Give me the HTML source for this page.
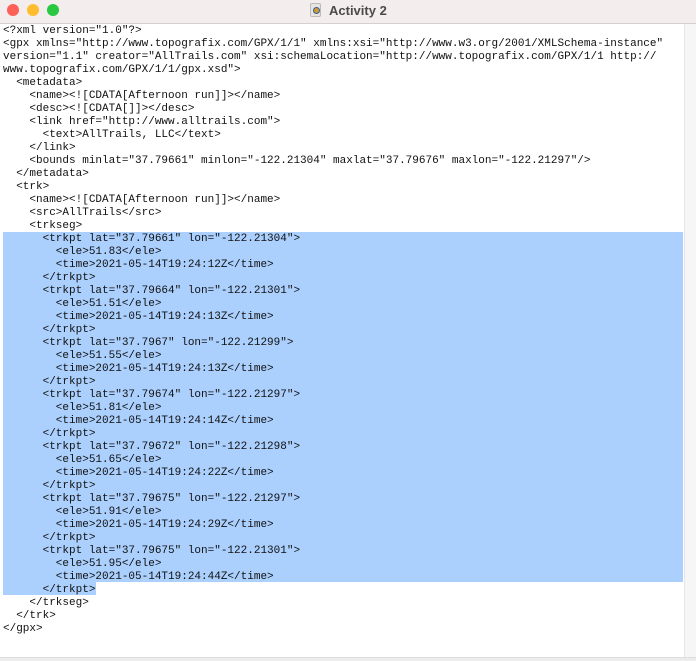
<!DOCTYPE html>
<html><head><meta charset="utf-8"><style>
body{margin:0;width:696px;height:660px;overflow:hidden;background:#fff;position:relative;font-family:"Liberation Sans",sans-serif}
.tb{position:absolute;left:0;top:0;width:696px;height:23px;background:#f4eded;border-bottom:1px solid #d6d0d0}
.dot{position:absolute;top:4px;width:12px;height:12px;border-radius:50%}
.title{position:absolute;left:329px;top:3px;font-size:13px;font-weight:bold;color:#4a4a4a}
.icon{position:absolute;left:310px;top:3px;width:11px;height:14px;background:#e8e4e0;border-radius:2px;border:1px solid #bbb;box-sizing:border-box}
.icon:after{content:"";position:absolute;left:2px;top:3px;width:5px;height:5px;border-radius:50%;background:#c9a030;border:1px solid #3a5a9a}
.gut{position:absolute;left:684px;top:24px;width:12px;height:636px;background:#f6f6f6;border-left:1px solid #e6e6e6}
.bot{position:absolute;left:0;top:657px;width:696px;height:3px;background:#ececec;border-top:1px solid #ddd}
.sel{position:absolute;background:#abd0fe}
pre{position:absolute;left:3px;top:25px;margin:0;font-family:"Liberation Mono",monospace;font-size:11px;line-height:13px;color:#111}
</style></head><body>
<div class="tb"></div>
<div class="dot" style="left:7px;background:#fe5f57"></div>
<div class="dot" style="left:27px;background:#febc2e"></div>
<div class="dot" style="left:47px;background:#28c840"></div>
<div class="icon"></div>
<div class="title">Activity 2</div>
<div class="gut"></div>
<div class="sel" style="left:3px;top:232px;width:680px;height:350px"></div>
<div class="sel" style="left:3px;top:582px;width:93px;height:13px"></div>
<pre>&lt;?xml version="1.0"?&gt;
&lt;gpx xmlns="http://www.topografix.com/GPX/1/1" xmlns:xsi="http://www.w3.org/2001/XMLSchema-instance"
version="1.1" creator="AllTrails.com" xsi:schemaLocation="http://www.topografix.com/GPX/1/1 http://
www.topografix.com/GPX/1/1/gpx.xsd"&gt;
  &lt;metadata&gt;
    &lt;name&gt;&lt;![CDATA[Afternoon run]]&gt;&lt;/name&gt;
    &lt;desc&gt;&lt;![CDATA[]]&gt;&lt;/desc&gt;
    &lt;link href="http://www.alltrails.com"&gt;
      &lt;text&gt;AllTrails, LLC&lt;/text&gt;
    &lt;/link&gt;
    &lt;bounds minlat="37.79661" minlon="-122.21304" maxlat="37.79676" maxlon="-122.21297"/&gt;
  &lt;/metadata&gt;
  &lt;trk&gt;
    &lt;name&gt;&lt;![CDATA[Afternoon run]]&gt;&lt;/name&gt;
    &lt;src&gt;AllTrails&lt;/src&gt;
    &lt;trkseg&gt;
      &lt;trkpt lat="37.79661" lon="-122.21304"&gt;
        &lt;ele&gt;51.83&lt;/ele&gt;
        &lt;time&gt;2021-05-14T19:24:12Z&lt;/time&gt;
      &lt;/trkpt&gt;
      &lt;trkpt lat="37.79664" lon="-122.21301"&gt;
        &lt;ele&gt;51.51&lt;/ele&gt;
        &lt;time&gt;2021-05-14T19:24:13Z&lt;/time&gt;
      &lt;/trkpt&gt;
      &lt;trkpt lat="37.7967" lon="-122.21299"&gt;
        &lt;ele&gt;51.55&lt;/ele&gt;
        &lt;time&gt;2021-05-14T19:24:13Z&lt;/time&gt;
      &lt;/trkpt&gt;
      &lt;trkpt lat="37.79674" lon="-122.21297"&gt;
        &lt;ele&gt;51.81&lt;/ele&gt;
        &lt;time&gt;2021-05-14T19:24:14Z&lt;/time&gt;
      &lt;/trkpt&gt;
      &lt;trkpt lat="37.79672" lon="-122.21298"&gt;
        &lt;ele&gt;51.65&lt;/ele&gt;
        &lt;time&gt;2021-05-14T19:24:22Z&lt;/time&gt;
      &lt;/trkpt&gt;
      &lt;trkpt lat="37.79675" lon="-122.21297"&gt;
        &lt;ele&gt;51.91&lt;/ele&gt;
        &lt;time&gt;2021-05-14T19:24:29Z&lt;/time&gt;
      &lt;/trkpt&gt;
      &lt;trkpt lat="37.79675" lon="-122.21301"&gt;
        &lt;ele&gt;51.95&lt;/ele&gt;
        &lt;time&gt;2021-05-14T19:24:44Z&lt;/time&gt;
      &lt;/trkpt&gt;
    &lt;/trkseg&gt;
  &lt;/trk&gt;
&lt;/gpx&gt;</pre>
<div class="bot"></div>
</body></html>
